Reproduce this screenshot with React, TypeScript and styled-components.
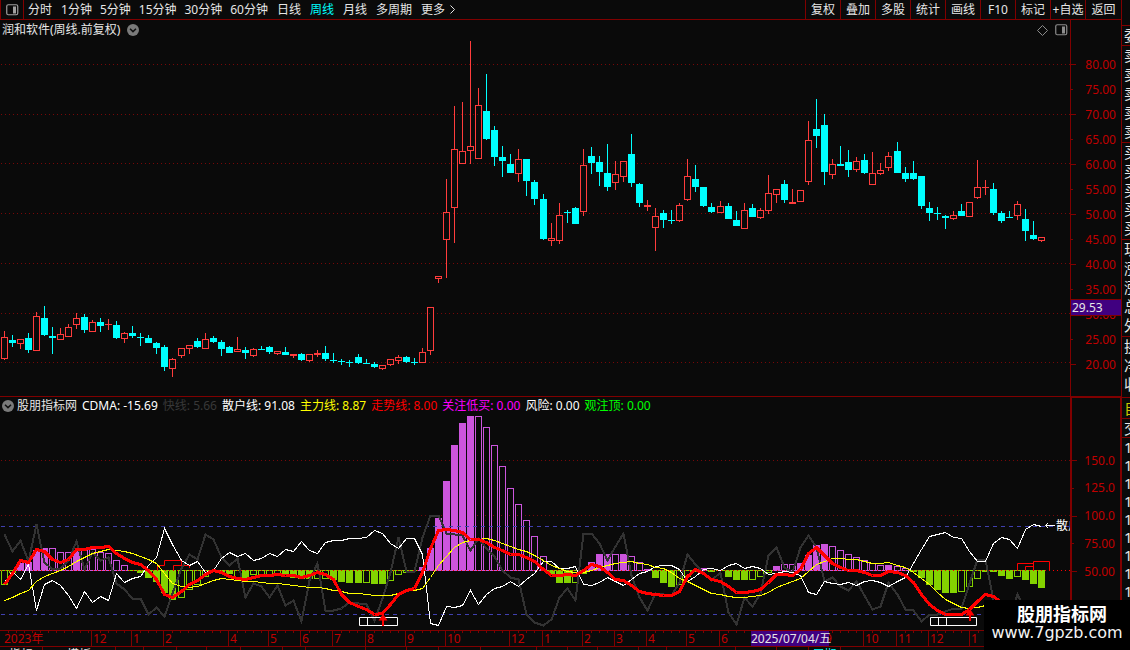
import React from "react";
import styled, { createGlobalStyle } from "styled-components";

const color = {
  bg: "#0a0a0a",
  frame: "#800000",
  grid: "#780808",
  axis: "#c00000",
  text: "#e6e6e6",
  up: "#ff3c3c",
  down: "#00ffff",
  purple: "#cc55dd",
  green: "#84d200",
  mark: "#400080",
};

const GlobalStyle = createGlobalStyle`
  * { box-sizing: border-box; }
  body {
    margin: 0;
    background: ${color.bg};
    color: ${color.text};
    font: 12px/16px "Noto Sans", "Noto Sans CJK SC", sans-serif;
  }
  button {
    font: inherit;
    color: inherit;
    background: none;
    border: 0;
    padding: 0;
    white-space: nowrap;
    cursor: pointer;
  }
`;

const Page = styled.main`
  display: grid;
  grid-template-columns: minmax(0, 1fr) 51px 9px;
  grid-template-rows: auto auto auto auto 1fr;
  min-height: 100vh;
  overflow: hidden;
  position: relative;
`;

const Toolbar = styled.nav`
  grid-column: 1 / 3;
  display: flex;
  height: 20px;
  border-bottom: 1px solid ${color.frame};
  overflow: hidden;
`;

const PanelToggle = styled.button`
  width: 24px;
  flex: none;
  display: grid;
  place-items: center;
  border: solid ${color.frame};
  border-width: 0 1px;
`;

const Periods = styled.div`
  display: flex;
  gap: 9px;
  padding-left: 4px;
`;

const PeriodGroup = styled.div<{ $gap: number }>`
  display: flex;
  align-items: center;
  gap: ${(p) => p.$gap}px;
`;

const Period = styled.button<{ $active?: boolean }>`
  color: ${(p) => (p.$active ? color.down : color.text)};
`;

const MorePeriods = styled(Period)`
  display: flex;
  align-items: center;
  gap: 5px;
`;

const Actions = styled.div`
  display: flex;
  margin-left: auto;
`;

const Action = styled.button`
  width: 35px;
  border-left: 1px solid ${color.frame};
  display: flex;
  justify-content: center;
  align-items: center;

  &:last-child {
    width: 36px;
  }
`;

const Panel = styled.section`
  grid-column: 1;
  min-width: 0;
`;

const IndicatorPanel = styled(Panel)`
  border-top: 1px solid ${color.frame};
`;

const TitleRow = styled.header`
  display: flex;
  align-items: center;
  gap: 7px;
  height: 18px;
  padding: 2px 2px 0;
`;

const Title = styled.h1`
  margin: 0;
  font: inherit;
`;

const TitleTools = styled.div`
  display: flex;
  gap: 7px;
  margin-left: auto;
`;

const IconButton = styled.button`
  display: grid;
  place-items: center;
`;

const Legend = styled.header`
  display: flex;
  align-items: center;
  gap: 5px;
  height: 18px;
  padding-left: 2px;
  white-space: nowrap;
  overflow: hidden;
`;

const LegendItem = styled.span<{ $color?: string }>`
  color: ${(p) => p.$color ?? "#ffffff"};
`;

const LegendName = styled(LegendItem)`
  margin-left: -2px;
`;

const Plot = styled.svg<{ $height: number }>`
  display: block;
  width: 100%;
  height: ${(p) => p.$height}px;
  overflow: hidden;
`;

const PriceAxis = styled.div`
  grid-column: 2;
  position: relative;
  border-left: 1px solid ${color.frame};
  padding-top: 32px;
`;

const IndicatorAxis = styled.div`
  grid-column: 2;
  border: solid ${color.frame};
  border-width: 2px 1px 0 2px;
  padding: 49px 0 45px;
  display: flex;
  flex-direction: column;
  justify-content: space-between;
`;

const AxisRow = styled.div<{ $major: boolean; $height: number }>`
  display: flex;
  align-items: center;
  justify-content: space-between;
  height: ${(p) => p.$height}px;
  padding-right: 5px;
  color: ${color.axis};

  &::before {
    content: "";
    width: ${(p) => (p.$major ? 5 : 2)}px;
    height: 1px;
    background: ${color.frame};
  }
`;

const PriceMark = styled.output`
  position: absolute;
  top: 279px;
  left: 0;
  right: 0;
  height: 17px;
  line-height: 15px;
  padding-left: 1px;
  background: ${color.mark};
  border: solid ${color.frame};
  border-width: 1px 0;
`;

const TimeAxis = styled.div`
  grid-column: 1 / 3;
  position: relative;
  display: flex;
  height: 17px;
  border: solid ${color.frame};
  border-width: 1px 0;
  overflow: hidden;
`;

const Month = styled.span<{ $width: number }>`
  flex: none;
  width: ${(p) => p.$width}px;
  padding-left: 1px;
  line-height: 15px;
  color: ${color.axis};
  border-left: 1px solid ${color.frame};
  background: repeating-linear-gradient(90deg, transparent 0 7px, ${color.frame} 7px 8px) 1px 0 / 100% 2px no-repeat;

  &:first-child {
    border-left: 0;
    padding-left: 4px;
  }
`;

const DateMark = styled.time`
  position: absolute;
  left: 751px;
  top: 0;
  width: 78px;
  height: 15px;
  line-height: 15px;
  text-align: center;
  white-space: nowrap;
  background: ${color.mark};
`;

const BottomTabs = styled.div`
  grid-column: 1 / 3;
  display: flex;
  height: 3px;
  overflow: hidden;
`;

const BottomTab = styled.button<{ $width: number; $active?: boolean }>`
  flex: none;
  width: ${(p) => p.$width}px;
  height: 16px;
  border-right: 1px solid ${color.frame};
  color: ${(p) => (p.$active ? color.down : color.text)};
`;

const Side = styled.aside`
  grid-column: 3;
  grid-row: 1 / 6;
  border-left: 1px solid ${color.frame};
  padding-top: 25px;
  overflow: hidden;
`;

const SideGroup = styled.ul<{ $row: number; $tail?: number }>`
  list-style: none;
  margin: 0;
  padding: 0 0 ${(p) => p.$tail ?? 0}px 2px;
  border-top: 1px solid ${color.frame};
  font-size: 15px;
  line-height: ${(p) => p.$row}px;
  white-space: nowrap;
`;

const SideRow = styled.li<{ $highlight?: boolean }>`
  color: ${(p) => (p.$highlight ? "#c8c800" : color.text)};
`;

const Watermark = styled.footer`
  position: absolute;
  right: 0;
  bottom: 0;
  width: 146px;
  height: 50px;
  padding-top: 4px;
  background: #000000;
  color: #ffffff;
  text-align: center;
  overflow: hidden;
`;

const WatermarkName = styled.strong`
  display: block;
  font-size: 18px;
  line-height: 20px;
  padding-left: 10px;
`;

const WatermarkUrl = styled.span`
  display: block;
  font: 16px/18px "DejaVu Sans", sans-serif;
  color: #f4f4f4;
`;

/* Horizontal centre of the n-th weekly bar. */
const barX = (i: number) => Math.floor(4.03 + i * 8.0449);

/* Direction (U up / D down) followed by high, body top, body bottom, low. */
type Candle = ["U" | "D", number, number, number, number];
const candles: Candle[] = [
  ["U", 331, 337, 359, 360], ["D", 335, 340, 343, 347], ["U", 339, 339, 344, 349], ["D", 333, 338, 350, 353],
  ["U", 312, 316, 351, 351], ["D", 306, 318, 335, 336], ["D", 327, 336, 338, 354], ["U", 328, 334, 340, 340],
  ["U", 324, 327, 337, 337], ["U", 313, 318, 325, 329], ["D", 314, 317, 330, 333], ["U", 320, 322, 332, 332],
  ["D", 318, 322, 326, 332], ["U", 319, 324, 325, 330], ["D", 321, 325, 338, 339], ["U", 332, 333, 339, 343],
  ["D", 326, 333, 336, 338], ["D", 333, 337, 338, 346], ["D", 335, 338, 343, 343], ["D", 342, 343, 348, 354],
  ["D", 345, 347, 367, 371], ["U", 358, 359, 369, 377], ["U", 348, 348, 356, 358], ["U", 345, 345, 349, 354],
  ["D", 338, 341, 347, 348], ["U", 333, 339, 349, 349], ["D", 336, 338, 342, 343], ["D", 340, 342, 349, 356],
  ["D", 346, 347, 353, 353], ["U", 337, 349, 352, 352], ["D", 347, 350, 353, 359], ["U", 348, 349, 356, 357],
  ["D", 346, 349, 350, 350], ["D", 346, 347, 352, 354], ["U", 351, 351, 354, 355], ["D", 347, 352, 355, 355],
  ["U", 354, 354, 356, 358], ["D", 353, 354, 360, 361], ["U", 354, 354, 361, 362], ["U", 350, 353, 355, 357],
  ["D", 346, 353, 359, 361], ["D", 353, 360, 361, 363], ["D", 359, 361, 362, 365], ["D", 360, 362, 363, 367],
  ["D", 354, 357, 363, 364], ["D", 359, 363, 364, 364], ["D", 362, 364, 367, 368], ["U", 365, 365, 369, 370],
  ["U", 359, 359, 365, 366], ["U", 355, 357, 361, 364], ["D", 356, 357, 362, 363], ["D", 358, 362, 363, 365],
  ["U", 348, 352, 363, 363], ["U", 307, 307, 351, 355], ["U", 276, 276, 279, 283], ["U", 179, 212, 240, 278],
  ["U", 106, 149, 208, 243], ["U", 102, 151, 164, 164], ["U", 41, 146, 151, 164], ["U", 88, 105, 159, 159],
  ["D", 74, 111, 139, 140], ["D", 126, 130, 157, 166], ["D", 146, 157, 161, 177], ["D", 154, 164, 173, 173],
  ["U", 149, 159, 174, 182], ["D", 159, 159, 181, 196], ["D", 180, 182, 199, 205], ["D", 194, 199, 239, 240],
  ["U", 223, 238, 241, 246], ["U", 203, 215, 241, 244], ["D", 210, 212, 213, 223], ["D", 207, 208, 224, 224],
  ["U", 149, 165, 212, 216], ["D", 147, 156, 163, 174], ["D", 156, 162, 172, 186], ["D", 144, 173, 187, 191],
  ["U", 161, 174, 183, 190], ["U", 161, 161, 177, 182], ["D", 134, 154, 183, 187], ["D", 183, 184, 203, 207],
  ["U", 200, 205, 207, 211], ["U", 208, 216, 228, 251], ["D", 210, 213, 220, 228], ["D", 210, 220, 221, 224],
  ["U", 203, 205, 221, 222], ["U", 159, 176, 200, 201], ["D", 165, 179, 187, 192], ["D", 187, 187, 206, 207],
  ["D", 203, 207, 212, 213], ["U", 201, 206, 213, 213], ["D", 203, 206, 219, 219], ["D", 211, 220, 226, 226],
  ["U", 203, 210, 229, 229], ["D", 204, 208, 217, 217], ["U", 208, 210, 218, 219], ["U", 175, 193, 211, 214],
  ["U", 189, 189, 195, 203], ["D", 180, 184, 200, 203], ["U", 189, 202, 204, 204], ["U", 190, 190, 202, 202],
  ["U", 121, 140, 182, 185], ["D", 99, 129, 136, 148], ["D", 114, 125, 172, 185], ["U", 159, 164, 175, 179],
  ["D", 146, 164, 166, 166], ["D", 150, 162, 170, 177], ["U", 157, 161, 170, 172], ["D", 154, 160, 173, 174],
  ["U", 152, 173, 185, 185], ["U", 163, 170, 174, 175], ["U", 152, 156, 168, 171], ["D", 142, 151, 173, 173],
  ["D", 167, 173, 179, 182], ["D", 161, 173, 179, 180], ["D", 176, 176, 206, 209], ["D", 202, 208, 213, 221],
  ["D", 207, 213, 214, 220], ["D", 215, 216, 218, 229], ["U", 211, 215, 219, 220], ["D", 204, 211, 216, 216],
  ["U", 202, 202, 217, 217], ["U", 160, 187, 198, 199], ["U", 180, 187, 188, 195], ["D", 183, 189, 213, 215],
  ["D", 211, 213, 221, 223], ["D", 211, 217, 218, 218], ["U", 201, 204, 216, 220], ["D", 209, 219, 231, 241],
  ["D", 221, 235, 239, 240], ["U", 237, 237, 241, 242],
];

/* P/p rise above the base line, G/g hang below it; lower case is hollow. */
const histogram =
  "g585 g573 P563 P562 P550 P548 p548 p552 p552 P550 p550 p549 p552 p553 p560 p565 g571 G573 G578 G582 G593 G600 g598 g590 g585 g577 g572 g572 G574 g578 G579 g575 " +
  "g575 g575 g575 G575 G578 G579 G579 g579 g579 G580 G582 G583 G583 g583 G584 G584 g581 g575 g573 g571 P567 P548 P518 P481 P445 P423 P416 p416 p427 p445 p466 p488 p504 p520 p536 p556 " +
  "G575 G583 G583 g583 g574 P562 P554 P554 p554 P554 p556 p562 P569 G578 G583 G587 g585 g577 G572 P568 G572 g571 G577 G580 G580 g580 g577 g573 P566 p564 p564 P563 P555 P545 P544 p546 " +
  "p550 p554 p557 p560 p563 p565 P565 p566 p568 G572 G578 G585 G590 G593 G593 g592 g587 g579 g572 G572 G576 G579 g577 G580 G584 G588";

const trend = [
  584, 573, 560, 562, 549, 551, 559, 562, 559, 549, 549, 547, 547, 546, 553, 558, 562, 564, 570, 579, 594, 597, 591, 584,
  580, 574, 570, 572, 576, 578, 579, 577, 575, 575, 574, 575, 575, 577, 575, 572, 574, 579, 594, 602, 606, 609, 614, 613,
  604, 594, 590, 588, 572, 548, 530, 529, 530, 532, 539, 539, 542, 547, 550, 554, 554, 557, 561, 569, 575, 575, 574, 575,
  570, 564, 566, 572, 579, 580, 585, 591, 593, 594, 595, 595, 591, 576, 569, 573, 579, 581, 586, 592, 592, 591, 589, 582,
  574, 574, 575, 569, 553, 547, 555, 563, 567, 570, 570, 572, 575, 575, 571, 572, 575, 582, 594, 604, 610, 614, 614, 614,
  609, 601, 594, 596, 602,
];

const mainForce = [
  600, 597, 593, 590, 581, 576, 573, 570, 566, 561, 557, 553, 551, 549, 550, 551, 553, 556, 559, 563, 573, 583, 586, 587,
  586, 583, 580, 578, 579, 580, 581, 581, 582, 583, 583, 584, 585, 586, 587, 587, 588, 590, 591, 593, 593, 594, 595, 595,
  595, 593, 590, 590, 588, 577, 565, 556, 547, 542, 540, 539, 538, 540, 543, 546, 549, 551, 555, 560, 565, 568, 571, 572,
  572, 570, 567, 565, 563, 562, 561, 563, 564, 567, 568, 572, 578, 581, 585, 589, 593, 594, 596, 597, 597, 596, 595, 592,
  587, 584, 581, 578, 571, 564, 561, 558, 558, 559, 559, 561, 563, 563, 562, 565, 567, 572, 578, 584, 592, 599, 603, 607,
  608, 607, 605,
];

const retail = [
  582, 571, 579, 564, 610, 584, 580, 585, 595, 608, 591, 602, 596, 600, 573, 582, 578, 576, 565, 557, 528, 544, 560, 565,
  561, 572, 570, 558, 552, 556, 553, 560, 558, 553, 556, 549, 551, 541, 550, 553, 542, 540, 540, 538, 538, 537, 530, 533,
  543, 548, 538, 538, 554, 623, 625, 606, 607, 605, 590, 604, 594, 588, 586, 581, 586, 579, 573, 561, 561, 568, 568, 566,
  584, 585, 582, 577, 581, 585, 579, 573, 571, 566, 565, 565, 569, 581, 576, 569, 568, 570, 565, 563, 568, 566, 568, 574,
  573, 571, 572, 575, 592, 594, 581, 583, 584, 582, 585, 581, 580, 582, 586, 581, 577, 563, 549, 536, 534, 532, 537, 538,
  551, 561, 561, 543, 537, 539, 548, 529, 524, 526,
];

const fast = [
  534, 551, 540, 561, 524, 562, 569, 568, 560, 541, 569, 552, 560, 557, 583, 589, 598, 598, 614, 607, 616, 593, 568, 554,
  559, 534, 539, 557, 565, 558, 597, 583, 586, 597, 585, 605, 600, 621, 580, 563, 610, 610, 608, 602, 603, 604, 620, 598,
  572, 537, 571, 571, 537, 515, 515, 533, 534, 535, 550, 538, 548, 556, 570, 577, 579, 614, 622, 625, 619, 597, 588, 600,
  533, 533, 543, 560, 546, 533, 575, 597, 610, 593, 594, 595, 582, 554, 564, 572, 580, 572, 612, 624, 597, 606, 593, 555,
  547, 567, 572, 547, 535, 547, 581, 577, 586, 590, 581, 595, 609, 606, 582, 594, 609, 610, 621, 614, 614, 611, 608, 608,
  583, 559, 559, 600, 618, 617, 594, 610,
];

const linePoints = (ys: number[]) => ys.map((y, i) => `${barX(i) + 0.5},${y + 0.5}`).join(" ");

function GridLine({ y, stroke = color.grid, dash = "1 3" }: { y: number; stroke?: string; dash?: string }) {
  return <line x1={1} x2="100%" y1={y + 0.5} y2={y + 0.5} stroke={stroke} strokeDasharray={dash} />;
}

function CandleShape({ index, data }: { index: number; data: Candle }) {
  const [dir, high, top, bottom, low] = data;
  const x = barX(index);
  const fill = dir === "U" ? color.up : color.down;
  const hollow = dir === "U" && bottom - top > 2;
  return (
    <g fill={fill}>
      <rect x={x} y={high} width={1} height={top - high} />
      <rect x={x} y={bottom} width={1} height={low - bottom} />
      {hollow ? (
        <rect x={x - 2.5} y={top + 0.5} width={6} height={bottom - top - 1} fill="none" stroke={fill} />
      ) : (
        <rect x={x - 3} y={top} width={7} height={bottom - top} />
      )}
    </g>
  );
}

function HistogramBar({ index, code }: { index: number; code: string }) {
  const kind = code[0];
  const edge = Number(code.slice(1));
  const x = barX(index);
  const rising = kind.toLowerCase() === "p";
  const fill = rising ? color.purple : color.green;
  const top = rising ? edge : 570;
  const height = Math.max(1, rising ? 571 - edge : edge - 570);
  const hollow = kind === kind.toLowerCase() && height > 2;
  return (
    <g>
      <rect x={x - 4} y={570} width={8} height={1} fill={fill} />
      {hollow ? (
        <rect x={x - 2.5} y={top + 0.5} width={6} height={height - 1} fill="none" stroke={fill} />
      ) : (
        <rect x={x - 3} y={top} width={7} height={height} fill={fill} />
      )}
    </g>
  );
}

function PanelIcon({ stroke = "#8c8c8c" }: { stroke?: string }) {
  return (
    <svg width="13" height="12" viewBox="0 0 13 12" aria-hidden="true">
      <rect x="0.75" y="0.75" width="11" height="10" rx="1.5" fill="none" stroke={stroke} strokeWidth="1.2" />
      <rect x="7" y="2.5" width="3" height="7" fill={stroke} />
    </svg>
  );
}

function ChevronIcon() {
  return (
    <svg width="12" height="12" viewBox="0 0 12 12" aria-hidden="true">
      <circle cx="6" cy="6" r="6" fill="#7a7a7a" />
      <path d="M3 4.8 6 7.6 9 4.8" fill="none" stroke="#101010" strokeWidth="1.5" />
    </svg>
  );
}

const minutePeriods = ["1分钟", "5分钟", "15分钟", "30分钟", "60分钟"];
const longPeriods = ["日线", "周线", "月线", "多周期"];
const actions = ["复权", "叠加", "多股", "统计", "画线", "F10", "标记", "+自选", "返回"];
const prices = [80, 75, 70, 65, 60, 55, 50, 45, 40, 35, 30, 25, 20];
const levels = ["150.0", "125.0", "100.0", "75.00", "50.00"];
const legend: [string, string][] = [
  ["CDMA: -15.69", "#ffffff"],
  ["快线: 5.66", "#383838"],
  ["散户线: 91.08", "#ffffff"],
  ["主力线: 8.87", "#ffff00"],
  ["走势线: 8.00", "#ff0000"],
  ["关注低买: 0.00", "#ff00ff"],
  ["风险: 0.00", "#ffffff"],
  ["观注顶: 0.00", "#00ff00"],
];
const months: [string, number][] = [
  ["2023年", 91], ["12", 40], ["1", 32], ["2", 65], ["4", 40], ["5", 32], ["6", 32], ["7", 33], ["8", 40], ["9", 40],
  ["10", 64], ["12", 33], ["1", 40], ["2", 32], ["3", 32], ["4", 40], ["5", 33], ["6", 32], ["", 32], ["", 40],
  ["9", 40], ["10", 33], ["11", 32], ["12", 41], ["1", 60],
];
const tabs: [string, number][] = [
  ["指标", 43], ["模板", 73], ["MA", 28], ["VOL", 33], ["KDJ", 30], ["RSI", 34], ["MACD", 42], ["W", 23], ["BOLL", 60],
  ["DMI", 41], ["CR", 32], ["ASI", 42], ["TRIX", 56], ["VR", 31], ["WR", 30], ["OBV", 41], ["CCI", 28], ["ROC", 69],
  ["MTM", 41], ["PSY", 32], ["周期", 32],
];

export default function App() {
  return (
    <>
      <GlobalStyle />
      <Page>
        <Toolbar aria-label="周期">
          <PanelToggle aria-label="侧栏">
            <PanelIcon stroke="#a0a0a0" />
          </PanelToggle>
          <Periods>
            <Period>分时</Period>
            <PeriodGroup $gap={8}>
              {minutePeriods.map((name) => (
                <Period key={name}>{name}</Period>
              ))}
            </PeriodGroup>
            <PeriodGroup $gap={9}>
              {longPeriods.map((name) => (
                <Period key={name} $active={name === "周线"}>
                  {name}
                </Period>
              ))}
              <MorePeriods>
                更多
                <svg width="5" height="9" viewBox="0 0 5 9" aria-hidden="true">
                  <path d="M0.5 0.5 4.5 4.5 0.5 8.5" fill="none" stroke={color.text} />
                </svg>
              </MorePeriods>
            </PeriodGroup>
          </Periods>
          <Actions>
            {actions.map((name) => (
              <Action key={name}>{name}</Action>
            ))}
          </Actions>
        </Toolbar>

        <Panel>
          <TitleRow>
            <Title>润和软件(周线.前复权)</Title>
            <IconButton aria-label="切换">
              <ChevronIcon />
            </IconButton>
            <TitleTools>
              <IconButton aria-label="标注">
                <svg width="11" height="11" viewBox="0 0 11 11" aria-hidden="true">
                  <path d="M5.5 0.5 10.5 5.5 5.5 10.5 0.5 5.5Z" fill="none" stroke="#8c8c8c" />
                </svg>
              </IconButton>
              <IconButton aria-label="右侧栏">
                <PanelIcon />
              </IconButton>
            </TitleTools>
          </TitleRow>
          <Plot $height={358} role="img" aria-label="周K线">
            <g transform="translate(0 -38)">
              {[64, 114, 163, 213, 263, 313, 362].map((y) => (
                <GridLine key={y} y={y} />
              ))}
              {candles.map((data, i) => (
                <CandleShape key={i} index={i} data={data} />
              ))}
            </g>
          </Plot>
        </Panel>
        <PriceAxis>
          {prices.map((value) => (
            <AxisRow key={value} $major={value % 10 === 0} $height={25}>
              {value.toFixed(2)}
            </AxisRow>
          ))}
          <PriceMark>29.53</PriceMark>
        </PriceAxis>

        <IndicatorPanel>
          <Legend>
            <IconButton aria-label="指标菜单">
              <ChevronIcon />
            </IconButton>
            <LegendName $color={color.text}>股朋指标网</LegendName>
            {legend.map(([label, tint]) => (
              <LegendItem key={label} $color={tint}>
                {label}
              </LegendItem>
            ))}
          </Legend>
          <Plot $height={215} role="img" aria-label="指标">
            <g transform="translate(0 -415)">
              <GridLine y={460} />
              <GridLine y={515} />
              {histogram.split(" ").map((code, i) => (
                <HistogramBar key={i} index={i} code={code} />
              ))}
              <GridLine y={570} stroke="#ff0000" />
              <GridLine y={526} stroke="#4040b0" dash="4 4" />
              <GridLine y={614} stroke="#4040b0" dash="4 4" />
              <path
                d="M157.5 570V565.5H164.5V560.5H181.5V570M173.5 570V565.5H189.5V568M1017.5 570V563.5H1033M1025.5 570V566.5H1033M1033.5 570V561.5H1049.5V570"
                fill="none"
                stroke="#ff0000"
              />
              <g fill="none" shapeRendering="crispEdges">
                <polyline points={linePoints(fast)} stroke="#333333" strokeWidth="2" />
                <polyline points={linePoints(retail)} stroke="#ffffff" />
                <polyline points={linePoints(mainForce)} stroke="#ffff00" />
                <polyline points={linePoints(trend)} stroke="#ff0000" strokeWidth="3" />
              </g>
              <path
                d="M359.5 617.5H397.5V625.5H359.5ZM367.5 617.5V625.5M930.5 617.5H976.5V625.5H930.5ZM938.5 617.5V625.5M946.5 617.5V625.5"
                fill="none"
                stroke="#ffffff"
              />
              <path d="M383 614 387.5 620.5H384V626H382V620.5H378.5ZM970 609 974.5 615.5H971V621H969V615.5H965.5Z" fill="#ff0000" />
              <path d="M1055 525.5H1045.5M1048 523 1045.5 525.5 1048 528" fill="none" stroke="#ffffff" />
              <text x="1056" y="530" fill="#ffffff">
                散户线
              </text>
            </g>
          </Plot>
        </IndicatorPanel>
        <IndicatorAxis>
          {levels.map((value, i) => (
            <AxisRow key={value} $major={i % 2 === 0} $height={27}>
              {value}
            </AxisRow>
          ))}
        </IndicatorAxis>

        <TimeAxis>
          {months.map(([name, width], i) => (
            <Month key={i} $width={width}>
              {name}
            </Month>
          ))}
          <DateMark dateTime="2025-07-04">2025/07/04/五</DateMark>
        </TimeAxis>

        <BottomTabs>
          {tabs.map(([name, width], i) => (
            <BottomTab key={i} $width={width} $active={i === tabs.length - 1}>
              {name}
            </BottomTab>
          ))}
        </BottomTabs>

        <Side>
          <SideGroup $row={19}>
            <SideRow>委比</SideRow>
          </SideGroup>
          <SideGroup $row={19} $tail={1}>
            {["卖五", "卖四", "卖三", "卖二", "卖一"].map((t) => (
              <SideRow key={t}>{t}</SideRow>
            ))}
          </SideGroup>
          <SideGroup $row={19} $tail={1}>
            {["买一", "买二", "买三", "买四", "买五"].map((t) => (
              <SideRow key={t}>{t}</SideRow>
            ))}
          </SideGroup>
          <SideGroup $row={19} $tail={1}>
            {["现价", "涨跌", "涨幅", "总量", "外盘"].map((t) => (
              <SideRow key={t}>{t}</SideRow>
            ))}
          </SideGroup>
          <SideGroup $row={19} $tail={3}>
            {["换手", "净资", "收益"].map((t) => (
              <SideRow key={t}>{t}</SideRow>
            ))}
          </SideGroup>
          <SideGroup $row={20}>
            <SideRow $highlight>自选</SideRow>
          </SideGroup>
          <SideGroup $row={18}>
            <SideRow>交易</SideRow>
          </SideGroup>
          <SideGroup $row={18}>
            {Array.from({ length: 9 }, (_, i) => (
              <SideRow key={i}>15:0{i}</SideRow>
            ))}
          </SideGroup>
        </Side>

        <Watermark>
          <WatermarkName>股朋指标网</WatermarkName>
          <WatermarkUrl>www.7gpzb.com</WatermarkUrl>
        </Watermark>
      </Page>
    </>
  );
}
